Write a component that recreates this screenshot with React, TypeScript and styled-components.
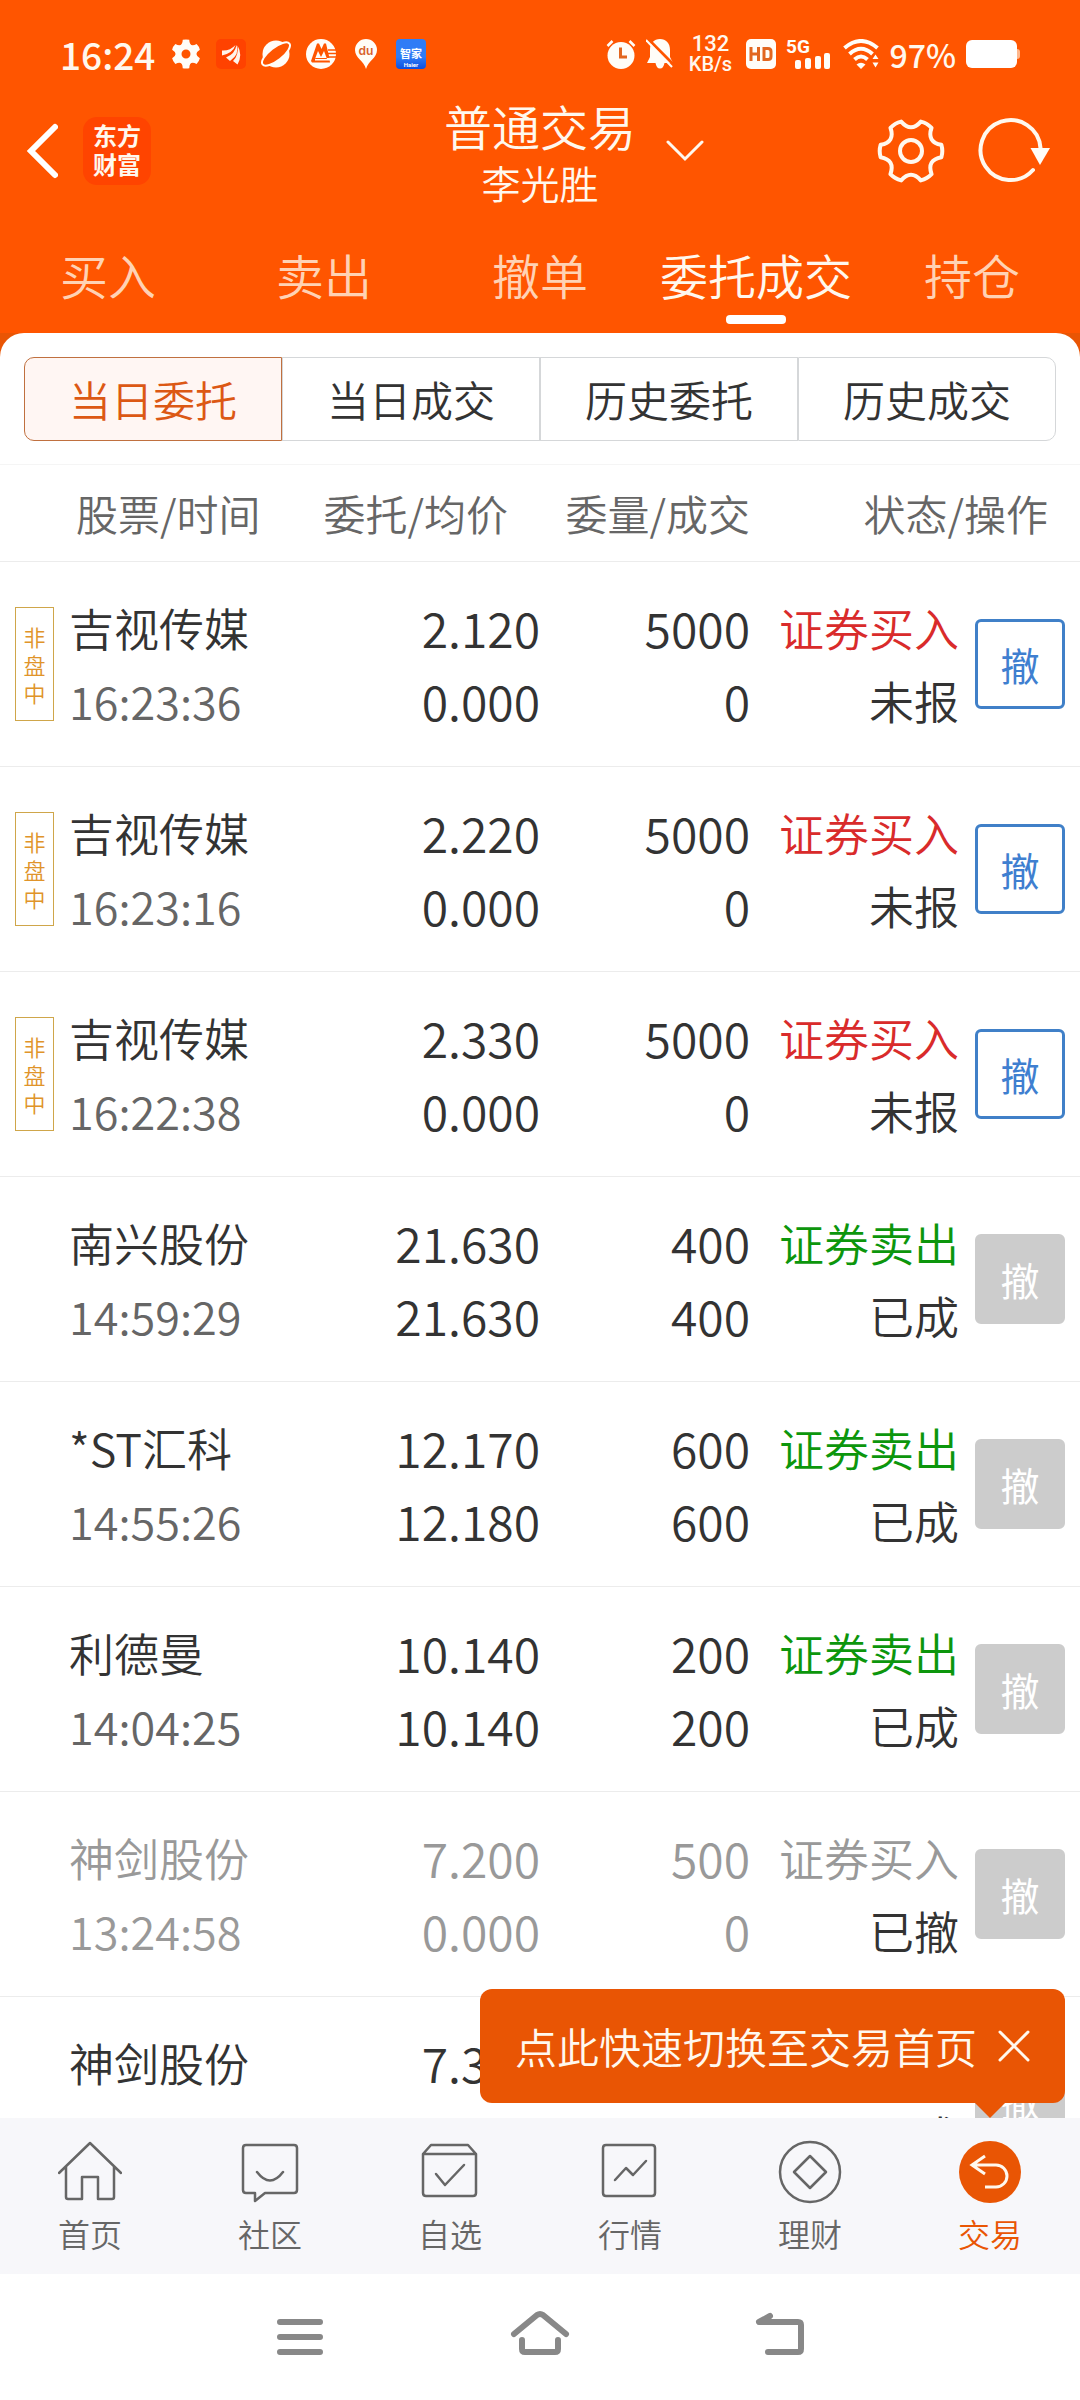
import React from 'react';
import styled, { createGlobalStyle } from 'styled-components';

const ORANGE = '#ff5500';
const DEEP = '#e95504';

const GlobalStyle = createGlobalStyle`
  * { box-sizing: border-box; }
  body {
    margin: 0;
    background: #fff;
    color: #333;
    font-family: "Noto Sans CJK SC", "Noto Sans", sans-serif;
    font-weight: 350;
  }
  button {
    font: inherit;
    color: inherit;
    background: none;
    border: 0;
    padding: 0;
    cursor: pointer;
  }
  svg { display: block; }
`;

const Screen = styled.div`
  display: flex;
  flex-direction: column;
  height: 100vh;
  overflow: hidden;
`;

/* ---------- header ---------- */

const Header = styled.header`
  background: ${ORANGE};
  color: #fff8ee;
`;

const StatusBar = styled.div`
  display: flex;
  justify-content: space-between;
  align-items: center;
  height: 96px;
  padding: 12px 60px 0;
  font-weight: 500;
`;

const StatusGroup = styled.div<{ $gap: number }>`
  display: flex;
  align-items: center;
  gap: ${(p) => p.$gap}px;
`;

const Clock = styled.time`
  min-width: 96px;
  font-size: 37px;
  line-height: 44px;
`;

const HaierIcon = styled.div`
  display: flex;
  flex-direction: column;
  align-items: center;
  justify-content: flex-end;
  width: 30px;
  height: 30px;
  border-radius: 4px;
  background: linear-gradient(#2f7cf6 0 60%, #0c4fe0);
  color: #fff;
  font-size: 11px;
  font-weight: 700;
  line-height: 16px;
`;

const HaierName = styled.span`
  font-family: Roboto, sans-serif;
  font-size: 6px;
  line-height: 8px;
`;

const Speed = styled.div`
  display: flex;
  flex-direction: column;
  width: 52px;
  text-align: center;
  font-family: Roboto, sans-serif;
  font-size: 22px;
  line-height: 20px;
`;

const SpeedUnit = styled.span`
  font-size: 20px;
`;

const Percent = styled.span`
  font-size: 32px;
  line-height: 40px;
`;

const TitleRow = styled.div`
  display: grid;
  grid-template-columns: 1fr auto 1fr;
  align-items: center;
`;

const TitleSide = styled.div<{ $pad: string }>`
  display: flex;
  align-items: center;
  padding: ${(p) => p.$pad};
`;

const Logo = styled.div`
  display: flex;
  flex-direction: column;
  justify-content: center;
  align-items: center;
  width: 68px;
  height: 68px;
  margin-left: 25px;
  padding-bottom: 4px;
  border-radius: 14px;
  background: #ff4400;
  font-size: 24px;
  line-height: 29px;
  font-weight: 700;
`;

const TitleBox = styled.div`
  text-align: center;
`;

const Title = styled.h1`
  margin: 0;
  font-size: 48px;
  line-height: 58px;
  font-weight: 350;
`;

const Account = styled.p`
  margin: 0;
  font-size: 39px;
  line-height: 56px;
`;

const ToolButtons = styled.div`
  display: flex;
  gap: 33px;
  margin-left: auto;
`;

const Tabs = styled.nav`
  display: grid;
  grid-template-columns: repeat(5, 1fr);
  height: 123px;
  padding-top: 34px;
`;

const Tab = styled.button<{ $active?: boolean }>`
  display: flex;
  flex-direction: column;
  align-items: center;
  justify-content: flex-start;
  gap: 11px;
  font-size: 48px;
  line-height: 60px;
  white-space: nowrap;
  color: ${(p) => (p.$active ? '#fff8ee' : '#ffd2b4')};
  &::after {
    content: '';
    width: 60px;
    height: 9px;
    border-radius: 4px;
    background: ${(p) => (p.$active ? '#fff' : 'transparent')};
  }
`;

/* ---------- order list ---------- */

const Backdrop = styled.main`
  flex: 1 1 0;
  min-height: 0;
  overflow: hidden;
  background: linear-gradient(${DEEP} 40px, #fff 40px);
`;

const Sheet = styled.section`
  border-radius: 24px 24px 0 0;
  background: #fff;
`;

const Segments = styled.div`
  display: grid;
  grid-template-columns: repeat(4, 1fr);
  padding: 24px 24px 23px;
`;

const Segment = styled.button<{ $active?: boolean }>`
  height: 84px;
  border: 1px solid ${(p) => (p.$active ? '#c0703f' : '#d5d7d9')};
  background: ${(p) => (p.$active ? '#fff6f3' : '#fff')};
  color: ${(p) => (p.$active ? '#dc5814' : '#333')};
  font-size: 42px;
  line-height: 60px;
  &:first-child { border-radius: 10px 0 0 10px; }
  &:last-child { border-radius: 0 10px 10px 0; }
`;

const Table = styled.table`
  width: 100%;
  table-layout: fixed;
  border-collapse: separate;
  border-spacing: 0;
`;

const Col = styled.col<{ $w?: number }>`
  width: ${(p) => (p.$w ? `${p.$w}px` : 'auto')};
`;

const HeadCell = styled.th<{ $align?: 'left'; $pad?: string }>`
  height: 98px;
  padding: ${(p) => p.$pad ?? '0'};
  border-top: 1px solid #f5f5f5;
  border-bottom: 1px solid #ececec;
  text-align: ${(p) => p.$align ?? 'right'};
  white-space: nowrap;
  color: #666;
  font-size: 42px;
  line-height: 60px;
  font-weight: 350;
`;

const Cell = styled.td<{ $align?: 'left' }>`
  height: 205px;
  padding: 0;
  border-bottom: 1px solid #ececec;
  text-align: ${(p) => p.$align ?? 'right'};
  vertical-align: middle;
  white-space: nowrap;
`;

const Line = styled.div<{ $color?: string; $num?: boolean }>`
  height: 73px;
  line-height: 73px;
  font-size: ${(p) => (p.$num ? 48 : 45)}px;
  color: ${(p) => p.$color ?? '#333'};
`;

const SessionTag = styled.div`
  width: 39px;
  margin-left: 15px;
  padding: 14px 7px;
  border: 1px solid #cfa64a;
  color: #e0942a;
  font-size: 22px;
  line-height: 28px;
  text-align: center;
  white-space: normal;
  word-break: break-all;
`;

const CancelButton = styled.button`
  width: 90px;
  height: 90px;
  margin-right: 15px;
  border: 3px solid #4080c8;
  border-radius: 6px;
  color: #3f7fd0;
  font-size: 39px;
  line-height: 60px;
  font-weight: 400;
  vertical-align: middle;
  &:disabled {
    border-color: #ccc;
    background: #ccc;
    color: #fff;
  }
`;

/* ---------- bottom ---------- */

const BottomNav = styled.nav`
  position: relative;
  display: grid;
  grid-template-columns: repeat(6, 1fr);
  height: 156px;
  padding-top: 22px;
  background: #f7f7fa;
`;

const NavItem = styled.a<{ $active?: boolean }>`
  display: flex;
  flex-direction: column;
  align-items: center;
  gap: 9px;
  color: ${(p) => (p.$active ? DEEP : '#666')};
  font-size: 32px;
  line-height: 40px;
  text-decoration: none;
`;

const Tip = styled.div`
  position: absolute;
  right: 15px;
  bottom: calc(100% + 15px);
  display: flex;
  align-items: center;
  gap: 21px;
  height: 114px;
  padding: 0 35px;
  border-radius: 12px;
  background: ${DEEP};
  color: #fff8ee;
  font-size: 42px;
  line-height: 60px;
  white-space: nowrap;
  &::after {
    content: '';
    position: absolute;
    top: 100%;
    right: 60px;
    border: 15px solid transparent;
    border-top-color: ${DEEP};
    border-bottom: 0;
  }
`;

const SystemNav = styled.div`
  display: flex;
  justify-content: center;
  align-items: center;
  gap: 180px;
  height: 126px;
`;

/* ---------- icons ---------- */

/* Outline of a six-toothed gear around the centre point. */
const gearPath = (c: number, r: number, dip: number, turn: number, half = 11.5) => {
  const at = (deg: number, rad: number) => {
    const a = ((deg + turn) * Math.PI) / 180;
    return `${(c + rad * Math.cos(a)).toFixed(2)} ${(c + rad * Math.sin(a)).toFixed(2)}`;
  };
  let d = `M${at(-half, r)}`;
  for (let k = 0; k < 6; k++) {
    const t = k * 60;
    d += `Q${at(t, r * 1.04)} ${at(t + half, r)}Q${at(t + 30, dip)} ${at(t + 60 - half, r)}`;
  }
  return `${d}Z`;
};

const StatusGear = () => (
  <svg width="30" height="30" fill="#fffdf8">
    <path fillRule="evenodd" d={`${gearPath(15, 14.5, 7, 30, 13)}M19.5 15a4.5 4.5 0 1 0-9 0a4.5 4.5 0 1 0 9 0Z`} />
  </svg>
);

const StatusFan = () => (
  <svg width="30" height="30">
    <rect width="30" height="30" rx="5" fill="#ff4200" />
    <g fill="#fff4ec">
      <path d="M6 11.500Q14 12 19.500 6Q17 14 6 16.500Z" />
      <path d="M10 18.500Q19 15 20.500 6Q24 15 14 22Z" />
      <path d="M17 22Q23 16 21.500 6.500Q27 16 21.500 25.500Z" />
    </g>
  </svg>
);

const StatusPlanet = () => (
  <svg width="30" height="30">
    <circle cx="15" cy="15" r="13.500" fill="#fffdf8" />
    <ellipse cx="15" cy="15" rx="17" ry="6.500" transform="rotate(-38 15 15)" fill={ORANGE} stroke="#fffdf8" strokeWidth="2" />
  </svg>
);

const StatusBank = () => (
  <svg width="30" height="30">
    <circle cx="15" cy="15" r="15" fill="#fffdf8" />
    <path d="M5 22L11 4.500H13L15.500 10L18 4.500H20L23 17L24 23.500H6Z" fill={ORANGE} />
    <path d="M9 20L12 12L15 18L18 12L21 20Z M9 21.500H25V19H9Z" fill="#fffdf8" />
    <path d="M22 11H30M22 14.500H30M23 18H30" stroke={ORANGE} strokeWidth="1.500" />
  </svg>
);

const StatusPin = () => (
  <svg width="30" height="30">
    <path d="M15 30C13 22 4 19 4 11a11 11 0 0 1 22 0C26 19 17 22 15 30Z" fill="#fffdf8" />
    <text x="15" y="16" textAnchor="middle" fontFamily="Inter, sans-serif" fontWeight="600" fontSize="12" fill="#d8602a">du</text>
  </svg>
);

const AlarmIcon = () => (
  <svg width="30" height="30" fill="none">
    <circle cx="15" cy="16.500" r="13.500" fill="#fffdf8" />
    <path d="M1.500 7L6.500 2M28.500 7L23.500 2" stroke="#fffdf8" strokeWidth="2.500" />
    <path d="M14.500 8.500V18H21" stroke="#e2661f" strokeWidth="3" />
  </svg>
);

const BellOffIcon = () => (
  <svg width="28" height="30" fill="none">
    <path d="M14 0C20 0 24 4 24 11V18L27 24H18.500Q17.500 29.500 14 29.500T9.500 24H1L4 18V11C4 4 8 0 14 0Z" fill="#fffdf8" />
    <path d="M2 0L29 27" stroke={ORANGE} strokeWidth="3" />
    <path d="M0 1L26 28" stroke="#fffdf8" strokeWidth="2" />
  </svg>
);

const HdIcon = () => (
  <svg width="30" height="30">
    <rect width="30" height="30" rx="5" fill="#fffdf8" />
    <path d="M5 8V22M12.500 8V22M5 15H12.500M18 9.500H22Q25 9.500 25 12.500V17.500Q25 20.500 22 20.500H18Z" fill="none" stroke="#e2661f" strokeWidth="3" />
  </svg>
);

const SignalIcon = () => (
  <svg width="47" height="36" viewBox="0 -3 47 36" fill="#fffdf8">
    <text x="0" y="14" fontFamily="Roboto, sans-serif" fontWeight="700" fontSize="19">5G</text>
    <rect x="9" y="21" width="6" height="9" rx="2" />
    <rect x="19" y="19" width="6" height="11" rx="2" />
    <rect x="29" y="17" width="6" height="13" rx="2" />
    <rect x="38" y="14" width="6" height="16" rx="2" />
  </svg>
);

const WifiIcon = () => (
  <svg width="36" height="30" fill="none">
    <g stroke="#fffdf8" strokeWidth="4">
      <path d="M1.500 9Q18 -5 34.500 9" />
      <path d="M6.500 15Q18 4.500 29.500 15" />
      <path d="M11.500 20.500Q18 14.500 24.500 20.500" />
    </g>
    <path d="M13.500 25.500Q18 22 22.500 25.500L18 30Z" fill="#fffdf8" />
    <path d="M29.500 20L32.500 15.500L35.500 20ZM29.500 23.500L32.500 28.500L35.500 23.500Z" fill="#fffdf8" />
  </svg>
);

const BatteryIcon = () => (
  <svg width="54" height="28">
    <rect width="51" height="28" rx="6" fill="#fff" />
    <path d="M51 9q3 0 3 3v4q0 3-3 3Z" fill="#ffb78c" />
  </svg>
);

const BackIcon = () => (
  <svg width="32" height="58" fill="none" stroke="#fff" strokeWidth="6" strokeLinecap="round">
    <path d="M29 5L5 29L29 53" />
  </svg>
);

const ChevronIcon = () => (
  <svg width="38" height="22" fill="none" stroke="#fff8ee" strokeWidth="3" strokeLinecap="round">
    <path d="M2 2L19 19L36 2" />
  </svg>
);

const SettingsIcon = () => (
  <svg width="68" height="68" fill="none" stroke="#fff8ee" strokeWidth="4" strokeLinejoin="round">
    <path d={gearPath(34, 31, 18, 0)} />
    <circle cx="34" cy="34" r="11" />
  </svg>
);

const RefreshIcon = () => (
  <svg width="72" height="68" fill="none">
    <path d="M55 53A30 30 0 1 1 62.500 31" stroke="#fff8ee" strokeWidth="4" strokeLinecap="round" />
    <path d="M52.500 31H72L62 48Z" fill="#fffdf8" />
  </svg>
);

const CloseIcon = () => (
  <svg width="32" height="32" fill="none" stroke="#fff8ee" strokeWidth="3" strokeLinecap="round">
    <path d="M2 2L30 30M30 2L2 30" />
  </svg>
);

const NavSvg = styled.svg.attrs({ width: 64, height: 64, viewBox: '0 0 64 64' })`
  fill: none;
  stroke: currentColor;
  stroke-width: 2.5;
  stroke-linecap: round;
  stroke-linejoin: round;
`;

const SystemSvg = styled.svg.attrs({ width: 60, height: 60, viewBox: '0 0 60 60' })`
  fill: none;
  stroke: #888;
  stroke-width: 6;
  stroke-linecap: round;
  stroke-linejoin: round;
`;

const navItems = [
  { label: '首页', icon: <path d="M1 33L32 3L63 33M8 27V57q0 2 2 2H24V37H40V59H54q2 0 2-2V27" /> },
  { label: '社区', icon: <path d="M8 5H56q3 0 3 3V50q0 3-3 3H27L17 61V53H8q-3 0-3-3V8q0-3 3-3ZM19 32Q32 49 45 32" /> },
  { label: '自选', icon: <path d="M5 14L13 5H50L58 14V53q0 3-3 3H8q-3 0-3-3ZM5 14H58M18 34L27 45L46 25" /> },
  { label: '行情', icon: <path d="M8 5H54q3 0 3 3V53q0 3-3 3H8q-3 0-3-3V8q0-3 3-3ZM17 40L28 28L35 35L48 21" /> },
  { label: '理财', icon: <><circle cx="32" cy="32" r="30" /><path d="M32 16L48 32L32 48L16 32Z" /></> },
  {
    label: '交易',
    active: true,
    icon: (
      <>
        <circle cx="32" cy="32" r="31" fill="currentColor" stroke="none" />
        <path d="M27 16L14 25L27 34M14 25H38a11 11 0 0 1 0 22H27" stroke="#fff8ee" strokeWidth="3" strokeLinecap="butt" strokeLinejoin="miter" />
      </>
    ),
  },
];

/* ---------- data ---------- */

type Order = {
  name: string;
  time: string;
  price: string;
  avg?: string;
  qty?: string;
  filled?: string;
  side?: '证券买入' | '证券卖出';
  state: string;
  open?: boolean;
  cancelled?: boolean;
};

const orders: Order[] = [
  { name: '吉视传媒', time: '16:23:36', price: '2.120', avg: '0.000', qty: '5000', filled: '0', side: '证券买入', state: '未报', open: true },
  { name: '吉视传媒', time: '16:23:16', price: '2.220', avg: '0.000', qty: '5000', filled: '0', side: '证券买入', state: '未报', open: true },
  { name: '吉视传媒', time: '16:22:38', price: '2.330', avg: '0.000', qty: '5000', filled: '0', side: '证券买入', state: '未报', open: true },
  { name: '南兴股份', time: '14:59:29', price: '21.630', avg: '21.630', qty: '400', filled: '400', side: '证券卖出', state: '已成' },
  { name: '*ST汇科', time: '14:55:26', price: '12.170', avg: '12.180', qty: '600', filled: '600', side: '证券卖出', state: '已成' },
  { name: '利德曼', time: '14:04:25', price: '10.140', avg: '10.140', qty: '200', filled: '200', side: '证券卖出', state: '已成' },
  { name: '神剑股份', time: '13:24:58', price: '7.200', avg: '0.000', qty: '500', filled: '0', side: '证券买入', state: '已撤', cancelled: true },
  { name: '神剑股份', time: '', price: '7.330', state: '已成' },
];

const OrderRow = ({ order }: { order: Order }) => {
  const muted = order.cancelled ? '#999' : undefined;
  const sideColor = muted ?? (order.side === '证券买入' ? '#d92b2b' : '#0c960c');
  return (
    <tr>
      <Cell $align="left">{order.open && <SessionTag>非盘中</SessionTag>}</Cell>
      <Cell $align="left">
        <Line $color={muted}>{order.name}</Line>
        <Line $color={muted ?? '#666'}>{order.time}</Line>
      </Cell>
      <Cell>
        <Line $num $color={muted}>{order.price}</Line>
        <Line $num $color={muted}>{order.avg}</Line>
      </Cell>
      <Cell>
        <Line $num $color={muted}>{order.qty}</Line>
        <Line $num $color={muted}>{order.filled}</Line>
      </Cell>
      <Cell>
        <Line $color={sideColor}>{order.side}</Line>
        <Line>{order.state}</Line>
      </Cell>
      <Cell>
        <CancelButton disabled={!order.open}>撤</CancelButton>
      </Cell>
    </tr>
  );
};

export default function App() {
  return (
    <Screen>
      <GlobalStyle />
      <Header>
        <StatusBar>
          <StatusGroup $gap={15}>
            <Clock>16:24</Clock>
            <StatusGear />
            <StatusFan />
            <StatusPlanet />
            <StatusBank />
            <StatusPin />
            <HaierIcon>
              智家
              <HaierName>Haier</HaierName>
            </HaierIcon>
          </StatusGroup>
          <StatusGroup $gap={10}>
            <AlarmIcon />
            <BellOffIcon />
            <Speed>
              132
              <SpeedUnit>KB/s</SpeedUnit>
            </Speed>
            <HdIcon />
            <SignalIcon />
            <WifiIcon />
            <Percent>97%</Percent>
            <BatteryIcon />
          </StatusGroup>
        </StatusBar>

        <TitleRow>
          <TitleSide $pad="0 0 4px 26px">
            <button aria-label="返回"><BackIcon /></button>
            <Logo>
              <span>东方</span>
              <span>财富</span>
            </Logo>
          </TitleSide>
          <TitleBox>
            <Title>普通交易</Title>
            <Account>李光胜</Account>
          </TitleBox>
          <TitleSide $pad="0 30px 4px">
            <button aria-label="切换账户"><ChevronIcon /></button>
            <ToolButtons>
              <button aria-label="设置"><SettingsIcon /></button>
              <button aria-label="刷新"><RefreshIcon /></button>
            </ToolButtons>
          </TitleSide>
        </TitleRow>

        <Tabs>
          <Tab>买入</Tab>
          <Tab>卖出</Tab>
          <Tab>撤单</Tab>
          <Tab $active>委托成交</Tab>
          <Tab>持仓</Tab>
        </Tabs>
      </Header>

      <Backdrop>
        <Sheet>
          <Segments>
            <Segment $active>当日委托</Segment>
            <Segment>当日成交</Segment>
            <Segment>历史委托</Segment>
            <Segment>历史成交</Segment>
          </Segments>
          <Table>
            <colgroup>
              <Col $w={69} />
              <Col />
              <Col $w={210} />
              <Col $w={210} />
              <Col $w={209} />
              <Col $w={121} />
            </colgroup>
            <thead>
              <tr>
                <HeadCell scope="col" colSpan={2} $align="left" $pad="0 0 0 76px">股票/时间</HeadCell>
                <HeadCell scope="col" $pad="0 32px 0 0"><HeadShift>委托/均价</HeadShift></HeadCell>
                <HeadCell scope="col">委量/成交</HeadCell>
                <HeadCell scope="col" colSpan={2} $pad="0 32px 0 0">状态/操作</HeadCell>
              </tr>
            </thead>
            <tbody>
              {orders.map((order, i) => (
                <OrderRow key={i} order={order} />
              ))}
            </tbody>
          </Table>
        </Sheet>
      </Backdrop>

      <BottomNav>
        {navItems.map((item) => (
          <NavItem key={item.label} href="#" $active={item.active}>
            <NavSvg>{item.icon}</NavSvg>
            {item.label}
          </NavItem>
        ))}
        <Tip>
          点此快速切换至交易首页
          <button aria-label="关闭"><CloseIcon /></button>
        </Tip>
      </BottomNav>

      <SystemNav>
        <button aria-label="最近任务">
          <SystemSvg><path d="M10 15H50M10 30H50M10 45H50" /></SystemSvg>
        </button>
        <button aria-label="主屏幕">
          <SystemSvg><path d="M4 27L27 8Q30 6 33 8L56 27M12 33V42q0 3 3 3H45q3 0 3-3V33" /></SystemSvg>
        </button>
        <button aria-label="返回上一页">
          <SystemSvg><path d="M20 9L9 15H48q3 0 3 3V42q0 3-3 3H18" /></SystemSvg>
        </button>
      </SystemNav>
    </Screen>
  );
}

/* The price heading is wider than its column once padded, so it grows to the left. */
const HeadShift = styled.span`
  display: flex;
  justify-content: flex-end;
`;
